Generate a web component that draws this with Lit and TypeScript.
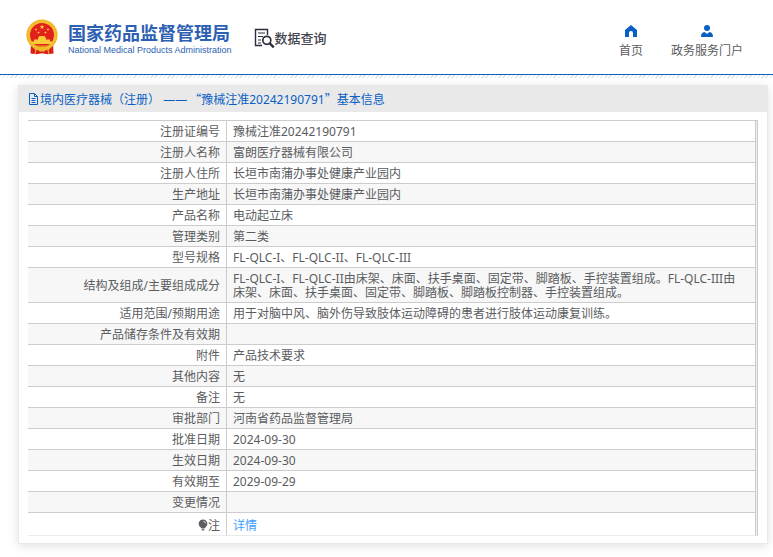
import { LitElement, html, css, svg } from "lit";
import { customElement } from "lit/decorators.js";

interface Row {
  label: string;
  value: string;
}

const ROWS: Row[] = [
  { label: "注册证编号", value: "豫械注准20242190791" },
  { label: "注册人名称", value: "富朗医疗器械有限公司" },
  { label: "注册人住所", value: "长垣市南蒲办事处健康产业园内" },
  { label: "生产地址", value: "长垣市南蒲办事处健康产业园内" },
  { label: "产品名称", value: "电动起立床" },
  { label: "管理类别", value: "第二类" },
  { label: "型号规格", value: "FL-QLC-I、FL-QLC-II、FL-QLC-III" },
  {
    label: "结构及组成/主要组成成分",
    value:
      "FL-QLC-I、FL-QLC-II由床架、床面、扶手桌面、固定带、脚踏板、手控装置组成。FL-QLC-III由床架、床面、扶手桌面、固定带、脚踏板、脚踏板控制器、手控装置组成。",
  },
  { label: "适用范围/预期用途", value: "用于对脑中风、脑外伤导致肢体运动障碍的患者进行肢体运动康复训练。" },
  { label: "产品储存条件及有效期", value: "" },
  { label: "附件", value: "产品技术要求" },
  { label: "其他内容", value: "无" },
  { label: "备注", value: "无" },
  { label: "审批部门", value: "河南省药品监督管理局" },
  { label: "批准日期", value: "2024-09-30" },
  { label: "生效日期", value: "2024-09-30" },
  { label: "有效期至", value: "2029-09-29" },
  { label: "变更情况", value: "" },
];

const star = (x: number, y: number, r: number) => {
  const pts = Array.from({ length: 10 }, (_, i) => {
    const a = (Math.PI / 5) * i - Math.PI / 2;
    const d = i % 2 ? r * 0.4 : r;
    return `${(x + d * Math.cos(a)).toFixed(2)},${(y + d * Math.sin(a)).toFixed(2)}`;
  }).join(" ");
  return svg`<polygon points=${pts} fill="#ffd83a"/>`;
};

@customElement("site-header")
class SiteHeader extends LitElement {
  static styles = css`
    :host {
      display: block;
    }
    .bar {
      display: flex;
      align-items: center;
      box-sizing: border-box;
      height: 74px;
      padding: 0 30px 0 25px;
    }
    a {
      color: inherit;
      text-decoration: none;
    }
    .brand {
      display: flex;
      align-items: center;
      gap: 9px;
    }
    .name {
      padding-top: 5px;
    }
    .cn {
      display: block;
      color: #2d5fb3;
      font-size: 18px;
      font-weight: 700;
      line-height: 20px;
    }
    .en {
      display: block;
      color: #2d5fb3;
      font-family: "Liberation Sans", sans-serif;
      font-size: 9px;
      line-height: 14px;
    }
    .query {
      display: flex;
      align-items: center;
      margin-left: 22px;
      padding-top: 2px;
      color: #44444c;
      font-size: 13px;
      font-weight: 500;
      line-height: 20px;
    }
    nav {
      display: flex;
      gap: 28px;
      margin-left: auto;
      padding-top: 11px;
    }
    nav a {
      display: flex;
      flex-direction: column;
      align-items: center;
      gap: 5px;
      line-height: 18px;
    }
    .stripes {
      height: 3px;
      border-top: 1px solid #0a5fc4;
      background: repeating-linear-gradient(135deg, #e2e2e2 0 1px, #fff 1px 3px);
    }
    svg {
      display: block;
    }
  `;

  render() {
    return html`
      <header>
        <div class="bar">
          <a class="brand" href="#">
            <svg width="34" height="36" viewBox="0 0 34 36" aria-hidden="true">
              <path d="M6 22l-.5 12.500 6 .8 5.500-1 5.500 1 6-.8L28 22z" fill="#dd1f1b" />
              <path d="M8 28l3 3-1 4M26 28l-3 3 1 4M11 31l3-1M23 31l-3-1" stroke="#f3bb25" fill="none" />
              <circle cx="17" cy="16" r="13.800" fill="#e3211c" stroke="#f3bd2e" stroke-width="3.600" />
              <circle cx="17" cy="16" r="14.800" fill="none" stroke="#dfa024" stroke-width=".6" stroke-dasharray="1.500 1.800" />
              ${star(17, 8, 2.6)} ${star(11, 10.5, 1.4)} ${star(13.5, 13.5, 1.4)} ${star(20.5, 13.5, 1.4)}
              ${star(23, 10.5, 1.4)}
              <path d="M13 19l1.500-2h5l1.500 2v1.500h4v2h2v2.500H7v-2.500h2v-2h4z" fill="#f9cb3a" />
              <path d="M9 26.500h16l-2 1H11z" fill="#e9a824" />
              <path d="M13.500 31a3.500 3.500 0 0 1 7 0l-1 1.500h-5z" fill="#f3bb25" />
            </svg>
            <span class="name">
              <span class="cn">国家药品监督管理局</span>
              <span class="en">National Medical Products Administration</span>
            </span>
          </a>
          <a class="query" href="#">
            <svg width="21" height="21" viewBox="0 0 21 21" fill="none" stroke="#2c2d3f" aria-hidden="true">
              <path d="M8 17.500H1.500v-16h12V7" stroke-width="1.400" />
              <path d="M4 5h7M4 8.500h5M4 12h3M4 15h3" stroke-width="1.200" />
              <circle cx="12.800" cy="12.300" r="4" stroke-width="1.700" />
              <path d="M15.800 15.400l4 4" stroke-width="2.400" />
            </svg>
            数据查询
          </a>
          <nav>
            <a href="#">
              <svg width="12" height="12" viewBox="0 0 12 12" aria-hidden="true">
                <path d="M6 0L0 5v7h4V8a2 2 0 0 1 4 0v4h4V5z" fill="#0a5fc4" />
              </svg>
              首页
            </a>
            <a href="#">
              <svg width="12" height="12" viewBox="0 0 12 12" fill="#0a5fc4" aria-hidden="true">
                <circle cx="6" cy="3" r="3" />
                <path d="M0 12c0-3 1-4.500 3.500-5L6 9l2.500-2C11 7.500 12 9 12 12z" />
              </svg>
              政务服务门户
            </a>
          </nav>
        </div>
        <div class="stripes"></div>
      </header>
    `;
  }
}

@customElement("info-card")
class InfoCard extends LitElement {
  static styles = css`
    :host {
      display: block;
      border: 1px solid #e9e9e9;
      border-top: 0;
      background: #fff;
      box-shadow: 0 2px 10px rgba(0, 0, 0, 0.12);
    }
    h1 {
      display: flex;
      align-items: center;
      box-sizing: border-box;
      margin: 0;
      padding: 1px 9px 0;
      height: 27px;
      background: #e9e9e9;
      color: #0a5fc4;
      font-size: 12px;
      font-weight: 400;
      white-space: pre-wrap;
    }
    .wide {
      font-family: "Noto Sans CJK SC", sans-serif;
    }
    .dash {
      margin-right: 2px;
      font-family: "Noto Sans", sans-serif;
    }
    .frame {
      margin: 8px 9px 7px;
      padding-right: 1px;
      border-top: 1px solid #ccc;
      border-right: 1px solid #ccc;
      background: #ebeef5;
    }
    table {
      width: 100%;
      border-collapse: separate;
      border-spacing: 0;
      background: #fff;
    }
    th,
    td {
      box-sizing: border-box;
      height: 21px;
      padding: 2px 6px 0;
      border-right: 1px solid #ccc;
      border-bottom: 1px solid #ccc;
      line-height: 14px;
      vertical-align: middle;
    }
    th {
      width: 199px;
      padding-left: 0;
      font-weight: 400;
      text-align: right;
    }
    td {
      padding-right: 12px;
      text-align: left;
      word-break: break-all;
    }
    .long td,
    .long th {
      height: 35px;
    }
    tr:nth-child(even) {
      background: #f7f7f7;
    }
    .note th,
    .note td {
      height: 23px;
      padding-top: 4px;
      border-bottom-color: #ebebeb;
    }
    td a {
      color: #409eff;
      text-decoration: none;
    }
    .bulb {
      vertical-align: -1px;
    }
  `;

  render() {
    return html`
      <h1><svg width="12" height="12" viewBox="0 0 12 12" fill="none" stroke="#0a5fc4" aria-hidden="true"><path d="M1.500.5h5l3 3v8h-8zM6.500.5v3h3M3.500 5.500h4M3.500 7.500h4M3.500 9.500h4" /></svg><span>境内医疗器械（注册） <span class="dash">——</span><span class="wide">“</span>豫械注准20242190791<span class="wide">”</span>基本信息</span></h1>
      <div class="frame">
        <table>
          <tbody>
            ${ROWS.map(
              (row) => html`<tr class=${row.value.length > 60 ? "long" : ""}>
                <th scope="row">${row.label}</th>
                <td>${row.value}</td>
              </tr>`
            )}
            <tr class="note">
              <th scope="row"><svg class="bulb" width="10" height="12" viewBox="0 0 10 12" aria-hidden="true"><path d="M5 .5a4.300 4.300 0 0 1 2.500 7.800L6.500 9.500h-3L2.500 8.300A4.300 4.300 0 0 1 5 .5zM3.500 10.300h3L6 11.500H4z" fill="#5c5e62" /><path d="M5.500 2.200q1.700.3 2 2" stroke="#fff" stroke-width=".8" fill="none" /></svg>注</th>
              <td><a href="#">详情</a></td>
            </tr>
          </tbody>
        </table>
      </div>
    `;
  }
}

@customElement("app-root")
class AppRoot extends LitElement {
  static styles = css`
    :host {
      display: block;
      background: #fff;
      color: #5a5c60;
      font-family: "Noto Sans", "Noto Sans CJK SC", sans-serif;
      font-size: 12px;
    }
    main {
      padding: 7px 5px 13px 18px;
    }
  `;

  render() {
    return html`
      <site-header></site-header>
      <main><info-card></info-card></main>
    `;
  }
}
